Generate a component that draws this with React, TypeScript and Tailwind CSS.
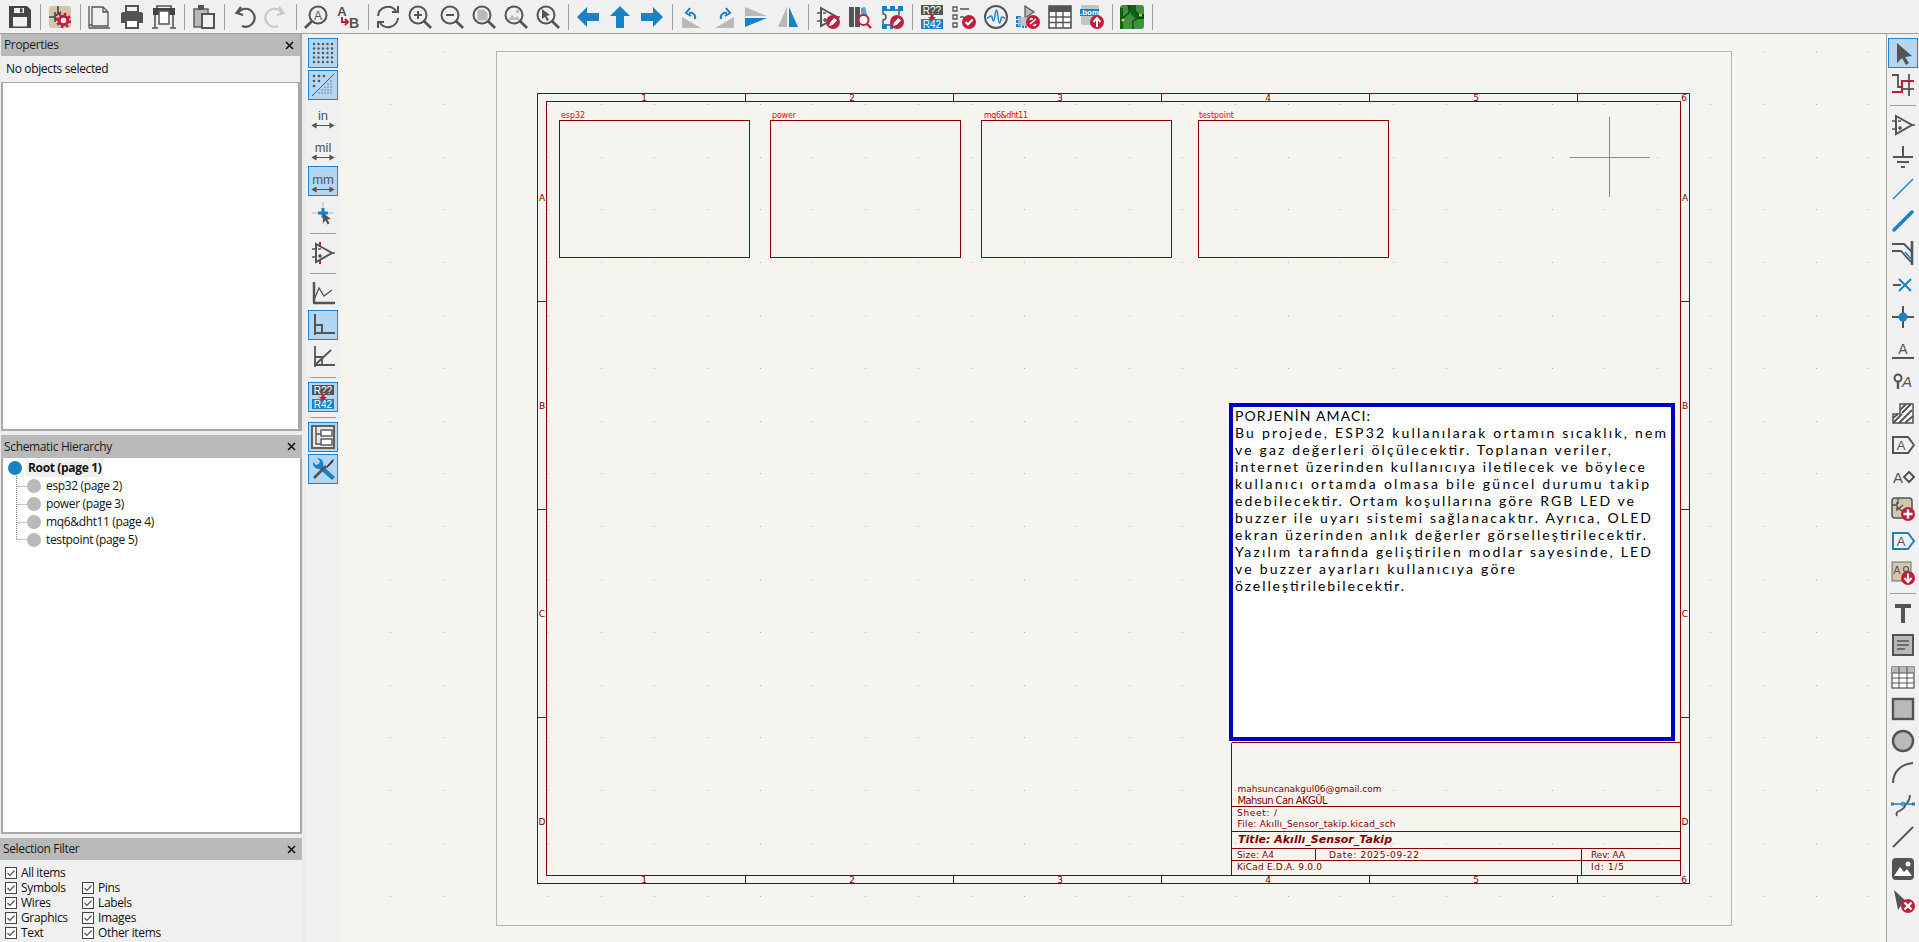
import type { ReactNode } from "react";

const D = "#545454";
const B = "#1a81c4";
const R = "#bf1e3c";
const G = "#b9b9b9";
const TAN = "#d2c7ac";

function Svg({ children }: { children: ReactNode }) {
    return <svg viewBox="0 0 24 24" className="w-6 h-6" fill="none">{children}</svg>;
}

const Mag = ({ children }: { children?: ReactNode }) => (
    <>
        <circle cx="10" cy="10" r="8.5" stroke={D} strokeWidth="2" />
        <path d="M16 16 23 23" stroke={D} strokeWidth="2.6" />
        {children}
    </>
);

const Opamp = ({ pins }: { pins?: boolean }) => (
    <>
        {pins && <path d="M9 1v4M9 19v4" stroke={R} strokeWidth="2" />}
        <path d="M5 3 21 12 5 21z" stroke={D} strokeWidth="2" />
        <path d="M1 8h4M1 16h4M21 12h3M7 8h3M7 15h4M9 13v4" stroke={D} strokeWidth="1.5" />
    </>
);

const RedDot = ({ children }: { children?: ReactNode }) => (
    <>
        <circle cx="17" cy="17" r="7" fill={R} />
        {children}
    </>
);

const Pen = () => <path d="M13 21l1-3.5 4.5-4.5 2.5 2.5-4.5 4.5z" fill="#fff" />;

const Lbl = (p: { x: number; y: number; s: number; t: string; c?: string; b?: boolean }) => (
    <text x={p.x} y={p.y} fontSize={p.s} fill={p.c ?? D} fontWeight={p.b ? 700 : 400} textAnchor="middle" className="font-['Liberation_Sans']">{p.t}</text>
);

const UnitArrow = () => <path d="M4 20.500h16M5 18.500l-3.500 2 3.500 2zM19 18.500l3.500 2-3.500 2z" stroke={D} strokeWidth="1.2" fill={D} />;

const Dots = ({ n, r, s, x0, y0 }: { n: number; r: number; s: number; x0: number; y0: number }) => (
    <>
        {Array.from({ length: n * n }).map((_, i) => (
            <circle key={i} cx={x0 + (i % n) * s} cy={y0 + Math.floor(i / n) * s} r={r} fill={D} />
        ))}
    </>
);

const icons: Record<string, ReactNode> = {
    save: (
        <>
            <path d="M1 1h18l4 4v18H1z" fill="#444" />
            <rect x="6" y="3" width="10" height="5" fill="#f0f0f0" />
            <rect x="12" y="3.500" width="2.500" height="4" fill="#444" />
            <rect x="5" y="12" width="14" height="9.500" fill="#f0f0f0" />
        </>
    ),
    setup: (
        <>
            <rect x="1" y="1" width="22" height="22" rx="3" fill={TAN} />
            <path d="M10 1v8M1 12h6M7 7v10M7 11l6-4M7 13l4 3" stroke="#444" strokeWidth="1.6" />
            <circle cx="15.5" cy="15.5" r="4.3" stroke={R} strokeWidth="3" fill="#fff" />
            <circle cx="15.5" cy="15.5" r="6.6" stroke={R} strokeWidth="2.2" strokeDasharray="2.6 2.6" />
        </>
    ),
    page: (
        <path d="M4 2h11l5 5v14H4zM1 1v22M1 23h21M15 2v5h5M1 20h3" stroke={D} strokeWidth="1.3" />
    ),
    print: (
        <>
            <path d="M6 1h12v6H6z" stroke={D} strokeWidth="2" />
            <path d="M1 9a2 2 0 0 1 2-2h18a2 2 0 0 1 2 2v9h-4v-4H5v4H1z" fill={D} />
            <rect x="6" y="15" width="12" height="8" stroke={D} strokeWidth="2" fill="#fff" />
        </>
    ),
    plot: (
        <>
            <rect x="1" y="3" width="22" height="7" fill="#444" />
            <path d="M5 3V1h14v2M3 10v13M21 10v13M0 23h6M18 23h6" stroke={D} strokeWidth="1.6" />
            <path d="M7 6h10v13H7z" fill="#fff" stroke={D} strokeWidth="1.5" />
        </>
    ),
    paste: (
        <>
            <rect x="2" y="4" width="14" height="18" fill={G} stroke={D} strokeWidth="1.4" />
            <rect x="6" y="0" width="6" height="5" fill={D} />
            <rect x="10" y="9" width="12" height="14" fill="#f0f0f0" stroke={D} strokeWidth="2" />
        </>
    ),
    undo: (
        <path d="M6 8A9 9 0 1 1 10 21M9 2 4.5 8 11 10" stroke={D} strokeWidth="2.2" />
    ),
    redo: (
        <path d="M18 8A9 9 0 1 0 14 21M15 2l4.5 6L13 10" stroke="#c8c8c8" strokeWidth="2.2" />
    ),
    find: (
        <>
            <circle cx="14" cy="10" r="8.5" stroke={D} strokeWidth="2" />
            <path d="M8 16 1 23" stroke={D} strokeWidth="2.6" />
            <Lbl x={14} y={14.5} s={12} t="A" />
        </>
    ),
    replace: (
        <>
            <Lbl x={6} y={11} s={13} t="A" b />
            <Lbl x={18} y={23} s={14} t="B" b />
            <path d="M6 12v5h5M9 14l3 3-3 3" stroke={R} strokeWidth="2" />
        </>
    ),
    refresh: (
        <path d="M2 11A10 10 0 0 1 20 6M22 1v6h-6M22 13A10 10 0 0 1 4 18M2 23v-6h6" stroke={D} strokeWidth="2" />
    ),
    zoomIn: <Mag><path d="M6 10h8M10 6v8" stroke={D} strokeWidth="2" /></Mag>,
    zoomOut: <Mag><path d="M6 10h8" stroke={D} strokeWidth="2" /></Mag>,
    zoomFit: <Mag><path d="M6 5h6l3 3v7H6z" fill={G} stroke={G} /></Mag>,
    zoomObj: <Mag><path d="M4 15l4-5 3 3 2-2 3 4zM12 5h3v3h-3z" fill={G} /></Mag>,
    zoomSel: <Mag><path d="M6 4l8 6-3.5 1 2.5 4-2 1-2-4-3 2z" fill={D} /></Mag>,
    left: <path d="M1 12 11 2v6h12v8H11v6z" fill={B} />,
    up: <path d="M12 1 22 11h-6v12H8V11H2z" fill={B} />,
    right: <path d="M23 12 13 2v6H1v8h12v6z" fill={B} />,
    rotL: (
        <>
            <path d="M2 12v11h19z" fill={G} />
            <path d="M15 14c1-4-2-7-6-6M10 3 6 8l5 3" stroke={B} strokeWidth="2" />
        </>
    ),
    rotR: (
        <>
            <path d="M22 12v11H3z" fill={G} />
            <path d="M9 14c-1-4 2-7 6-6M14 3l4 5-5 3" stroke={B} strokeWidth="2" />
        </>
    ),
    mirV: (
        <>
            <path d="M1 2 23 11H1z" fill={G} />
            <path d="M1 13H23L1 22z" fill={B} />
        </>
    ),
    mirH: (
        <>
            <path d="M11 2V22H2z" fill={G} />
            <path d="M13 2V22H22z" fill={B} />
        </>
    ),
    symEdit: <><Opamp /><RedDot><Pen /></RedDot></>,
    libBrowse: (
        <>
            <rect x="1" y="2" width="5" height="20" fill={D} />
            <rect x="7" y="2" width="5" height="20" fill={D} />
            <path d="M13 3l4-1 4 14h-8z" fill={B} opacity=".7" />
            <circle cx="15.5" cy="15" r="5" fill="#fff" stroke={R} strokeWidth="2" />
            <path d="M19 19l4 4" stroke={R} strokeWidth="2.4" />
        </>
    ),
    fpEdit: (
        <>
            <path d="M3 5h16v5M3 5v4a3 3 0 0 1 0 6v5h8" stroke={D} strokeWidth="1.5" />
            <path d="M2 1h5v5H2zM10 1h5v5h-5zM18 1h5v5h-5zM2 19h5v5H2zM10 19h3v5h-3z" fill={B} />
            <RedDot><Pen /></RedDot>
        </>
    ),
    annotate: (
        <>
            <rect x="1" y="0" width="22" height="10" fill={D} />
            <Lbl x={12} y={8.500} s={10} t="R??" c="#fff" />
            <rect x="1" y="14" width="22" height="10" fill={B} />
            <Lbl x={12} y={22.500} s={10} t="R42" c="#fff" />
            <path d="M10.500 9h3v3h2.500L12 16 8 12h2.500z" fill={R} />
        </>
    ),
    erc: (
        <>
            <path d="M1 2h4v4H1zM1 10h4v4H1zM1 18h4v4H1zM8 4h9M8 12h4" stroke={D} strokeWidth="1.3" />
            <RedDot><path d="M13.5 17l2.5 2.5 4.5-5" stroke="#fff" strokeWidth="2" /></RedDot>
        </>
    ),
    sim: (
        <>
            <circle cx="12" cy="12" r="11" stroke={D} strokeWidth="2" />
            <path d="M3 13c2 0 2-2 4-2s1 5 2.500 5 1.500-11 3-11 1.500 13 3 13 1-6 2.500-6 1 1 3 1" stroke={B} strokeWidth="1.5" />
        </>
    ),
    assign: (
        <>
            <path d="M9 1 18 7 9 13z" fill={G} stroke={D} strokeWidth="1.2" />
            <path d="M0 11h5v3H0zM0 15h5v3H0zM0 19h5v3H0zM6 20h2v3H6zM9 20h2v3H9z" fill={B} />
            <rect x="2" y="12" width="10" height="9" fill={G} opacity=".8" />
            <RedDot><path d="M14 19l6-5M14 15a2 2 0 0 1 3-1M20 19a2 2 0 0 1-3 1" stroke="#fff" strokeWidth="1.6" /></RedDot>
        </>
    ),
    table: (
        <>
            <rect x="1" y="1" width="22" height="22" fill="#fff" stroke={D} strokeWidth="1.6" />
            <rect x="1" y="1" width="22" height="6" fill={D} />
            <path d="M8 1v22M15 1v22M1 12h22M1 17.500h22" stroke={D} strokeWidth="1.4" />
        </>
    ),
    bom: (
        <>
            <rect x="1" y="0" width="18" height="20" rx="2" fill="#c4c4c4" />
            <rect x="0" y="4" width="19" height="7" fill={B} />
            <Lbl x={9.5} y={10} s={8} t=".bom" c="#fff" b />
            <RedDot><path d="M17 22v-9M13.500 17l3.500-4 3.500 4" stroke="#fff" strokeWidth="2" /></RedDot>
        </>
    ),
    pcb: (
        <>
            <rect x="0" y="0" width="24" height="24" rx="3" fill="#3f9142" />
            <path d="M0 3h3v24H0zM7 0h7v5l4 4h6v5h-8l-5-5z" fill="#0d6410" />
            <path d="M0 13h3l6-5V0M15 0v6l4 4h5M13 24v-8l5-3h6" stroke="#0d3d10" strokeWidth="1.200" />
            <circle cx="3" cy="15" r="1.600" fill="#e8b93a" />
            <circle cx="20.500" cy="10" r="1.600" fill="#e8b93a" />
        </>
    ),
    grid: <Dots n={5} r={1.2} s={4.5} x0={3} y0={3} />,
    gridOv: (
        <>
            {[[3, 3], [8, 3], [13, 3], [3, 8], [8, 8], [3, 13]].map(([x, y]) => (
                <circle key={x * 30 + y} cx={x} cy={y} r="1.3" fill={D} />
            ))}
            <path d="M1 23 23 1" stroke={D} strokeWidth="1" />
            {[[20, 8], [17, 11], [20, 11], [14, 14], [17, 14], [20, 14], [11, 17], [14, 17], [17, 17], [20, 17], [8, 20], [11, 20], [14, 20], [17, 20], [20, 20]].map(([x, y]) => (
                <circle key={x * 30 + y} cx={x} cy={y} r=".8" fill="#777" />
            ))}
        </>
    ),
    inch: <><Lbl x={12} y={15} s={13} t="in" /><UnitArrow /></>,
    mil: <><Lbl x={12} y={15} s={13} t="mil" /><UnitArrow /></>,
    mm: <><Lbl x={12} y={15} s={13} t="mm" /><UnitArrow /></>,
    crossCur: (
        <>
            <path d="M12 1v22M1 12h22" stroke={G} strokeWidth="1" />
            <path d="M12 7v10M7 12h10" stroke={B} strokeWidth="3" />
            <path d="M12 12l8 6-3.500.5 2 4-2 1-2-4-2.500 2.500z" fill={D} />
        </>
    ),
    opPins: <Opamp pins />,
    op: <Opamp />,
    lineAny: (
        <>
            <path d="M3 1v21M2 22h22" stroke={D} strokeWidth="2.500" />
            <path d="M3 19 8 7l5 8 8-6" stroke={D} strokeWidth="1.3" />
        </>
    ),
    line90: <path d="M4 1v21M3 20h21M4 12h7v8" stroke={D} strokeWidth="2" />,
    line45: <path d="M4 1v21M3 20h21M4 20 20 5M4 12h7v8" stroke={D} strokeWidth="1.8" />,
    hier: (
        <>
            <rect x="1" y="1" width="22" height="22" stroke={D} strokeWidth="1.800" fill="#e8e8e8" />
            <path d="M5 1v18h5M5 9h5" stroke={D} strokeWidth="1.400" />
            <rect x="10" y="5" width="11" height="6" fill="#fff" stroke={D} strokeWidth="1.400" />
            <rect x="10" y="14" width="11" height="6" fill="#fff" stroke={D} strokeWidth="1.400" />
        </>
    ),
    tools: (
        <>
            <path d="M2 5l3 3 3-1 1-3-3-3a6 6 0 0 1 6 8l12 11-3 3L8.500 12A6 6 0 0 1 2 5z" fill={B} />
            <path d="M3 21 15 9" stroke={D} strokeWidth="2.600" />
            <path d="M15 10l6-7 2-1-1 3-6 6z" fill="#333" />
        </>
    ),
    arrow: <path d="M6 2l15 13-7 1 4 6-3 2-4-7-5 5z" fill={D} />,
    route: (
        <>
            <path d="M1 2h6v12h4M18 1v22" stroke={D} strokeWidth="1.800" />
            <path d="M1 19h10V8h12" stroke={R} strokeWidth="2.200" />
            <path d="M11 16h12" stroke={D} strokeWidth="1.800" />
        </>
    ),
    ground: <path d="M12 1v11M2 12h20M6 17h12M10 22h4" stroke={D} strokeWidth="2" />,
    wire: <path d="M2 22 22 2" stroke={B} strokeWidth="1.500" />,
    bus: <path d="M3 21 21 3" stroke={B} strokeWidth="3.500" strokeLinecap="round" />,
    busEntry: (
        <>
            <path d="M21 0v24" stroke={D} strokeWidth="2.600" />
            <path d="M1 3h12l8 8M1 10h9l10 11" stroke={D} strokeWidth="1.800" />
            <path d="M14 11 21 19" stroke={B} strokeWidth="1.500" />
        </>
    ),
    noConn: <><path d="M2 12h8" stroke={D} strokeWidth="2" /><path d="M8 6l12 12M20 6 8 18" stroke={B} strokeWidth="2" /></>,
    junction: <><path d="M1 12h22M12 1v22" stroke={D} strokeWidth="2" /><circle cx="12" cy="12" r="4.500" fill={B} /></>,
    label: <><Lbl x={12} y={17} s={14} t="A" /><path d="M1 21h22" stroke={D} strokeWidth="2" /></>,
    netClass: (
        <>
            <circle cx="7" cy="9" r="3.500" stroke={D} strokeWidth="2" />
            <path d="M7 13v7" stroke={D} strokeWidth="2.400" />
            <text x="11" y="18" fontSize="15" fontStyle="italic" fill={D} className="font-['Liberation_Sans']">A</text>
        </>
    ),
    rule: (
        <>
            <path d="M2 22V13h7V3h13v19z" fill="#fff" stroke={D} strokeWidth="1.500" />
            <path d="M2 17l5-4M2 22l9-9M8 22 21 9M14 22l8-7M9 9l6-6M11 12l9-9" stroke={D} strokeWidth="2" />
        </>
    ),
    global: (
        <>
            <path d="M2 4h15l6 8-6 8H2z" stroke={D} strokeWidth="2" />
            <Lbl x={10} y={17} s={13} t="A" />
            <path d="M22 12h2" stroke={B} strokeWidth="2" />
        </>
    ),
    hierLabel: (
        <>
            <Lbl x={7} y={18} s={15} t="A" />
            <path d="M18 7l5 5-5 5-5-5z" stroke={D} strokeWidth="2" />
        </>
    ),
    sheetAdd: (
        <>
            <rect x="1" y="1" width="20" height="20" rx="3" fill={TAN} stroke={D} strokeWidth="1.500" />
            <path d="M7 1v6M1 8h5M6 5v8l6-5M6 10l5 4" stroke={D} strokeWidth="1.400" />
            <RedDot><path d="M17 12.500v9M12.500 17h9" stroke="#fff" strokeWidth="2.400" /></RedDot>
        </>
    ),
    hierPin: (
        <>
            <path d="M2 4h15l6 8-6 8H2z" stroke={B} strokeWidth="2" />
            <Lbl x={10} y={17} s={13} t="A" />
            <path d="M22 12h2" stroke={B} strokeWidth="2" />
        </>
    ),
    importLbl: (
        <>
            <rect x="1" y="1" width="19" height="19" fill={TAN} stroke={D} strokeWidth=".8" />
            <Lbl x={6} y={13} s={11} t="A" />
            <circle cx="15" cy="8" r="2.500" stroke={D} strokeWidth="1.200" />
            <RedDot><path d="M17 12.500v8M13.500 17l3.500 4 3.500-4" stroke="#fff" strokeWidth="2" /></RedDot>
        </>
    ),
    text: <path d="M4 3h16v4h-6v15h-4V7H4z" fill={D} />,
    textBox: (
        <>
            <rect x="2" y="2" width="20" height="20" fill={G} stroke={D} strokeWidth="2" />
            <path d="M6 8h12M6 12h12M6 16h8" stroke={D} strokeWidth="1.300" />
        </>
    ),
    gridTable: (
        <>
            <rect x="1" y="2" width="22" height="21" fill="#fff" stroke={D} strokeWidth="1.200" />
            <rect x="1" y="2" width="22" height="6" fill={G} />
            <path d="M8 2v21M16 2v21M1 8h22M1 13h22M1 18h22" stroke={D} strokeWidth="1" />
        </>
    ),
    rect: <rect x="2" y="2" width="20" height="20" fill={G} stroke={D} strokeWidth="2.400" />,
    circle: <circle cx="12" cy="12" r="10" fill={G} stroke={D} strokeWidth="2.400" />,
    arc: <path d="M2 22C2 11 10 3 22 2" stroke={D} strokeWidth="2" />,
    bezier: (
        <>
            <path d="M6 23c-3-6 6-4 8-10 1-3 5-4 5-11" stroke={D} strokeWidth="1.800" />
            <path d="M1 11h22" stroke={B} strokeWidth="1.500" />
            <rect x="0" y="9.500" width="3" height="3" fill={B} />
            <rect x="21" y="9.500" width="3" height="3" fill={B} />
            <circle cx="12" cy="11" r="2" stroke={B} fill="none" />
        </>
    ),
    gline: <path d="M2 22 22 2" stroke={D} strokeWidth="1.800" />,
    image: (
        <>
            <rect x="1" y="1" width="22" height="22" rx="4" fill={D} />
            <path d="M3 19 9 10l4 5 3-3 5 7z" fill="#fff" />
            <circle cx="17" cy="7" r="2.500" fill="#fff" />
        </>
    ),
    del: (
        <>
            <path d="M3 1l14 13-6 1-4 6z" fill={D} />
            <RedDot><path d="M13.500 13.500l7 7M20.500 13.500l-7 7" stroke="#fff" strokeWidth="2.400" /></RedDot>
        </>
    ),
};

function ToolBtn({ name, on }: { name: string; on?: boolean }) {
    return (
        <div className="w-8 h-8 shrink-0 flex items-center justify-center">
            <div className={`w-[30px] h-[30px] flex items-center justify-center ${on ? "bg-[#b3d7f3] border border-[#1a83d6]" : ""}`}>
                <Svg>{icons[name]}</Svg>
            </div>
        </div>
    );
}

const topBar = [
    ["save"], ["setup"],
    ["page", "print", "plot"], ["paste"], ["undo", "redo"], ["find", "replace"],
    ["refresh", "zoomIn", "zoomOut", "zoomFit", "zoomObj", "zoomSel"],
    ["left", "up", "right"], ["rotL", "rotR", "mirV", "mirH"],
    ["symEdit", "libBrowse", "fpEdit"],
    ["annotate", "erc", "sim", "assign", "table", "bom"], ["pcb"],
];

function TopToolbar() {
    return (
        <div className="h-[34px] shrink-0 bg-[#f0f0f0] border-b border-[#a0a0a0] flex items-center pl-1">
            {topBar.map((group) => (
                <div key={group[0]} className="flex items-center">
                    {group.map((n) => <ToolBtn key={n} name={n} />)}
                    <div className="w-2 flex justify-center"><div className="w-px h-[26px] bg-[#a0a0a0]" /></div>
                </div>
            ))}
        </div>
    );
}

type SideItem = { n: string; on?: boolean } | "sep";

const leftBar: SideItem[] = [
    { n: "grid", on: true }, { n: "gridOv", on: true }, { n: "inch" }, { n: "mil" }, { n: "mm", on: true }, { n: "crossCur" },
    "sep", { n: "opPins" }, "sep", { n: "lineAny" }, { n: "line90", on: true }, { n: "line45" },
    "sep", { n: "annotate", on: true }, "sep", { n: "hier", on: true }, { n: "tools", on: true },
];

const rightBar: SideItem[] = [
    { n: "arrow", on: true }, { n: "route" }, "sep",
    { n: "op" }, { n: "ground" }, { n: "wire" }, { n: "bus" }, { n: "busEntry" }, { n: "noConn" }, { n: "junction" },
    { n: "label" }, { n: "netClass" }, { n: "rule" }, { n: "global" }, { n: "hierLabel" }, { n: "sheetAdd" }, { n: "hierPin" }, { n: "importLbl" },
    "sep", { n: "text" }, { n: "textBox" }, { n: "gridTable" }, { n: "rect" }, { n: "circle" }, { n: "arc" }, { n: "bezier" }, { n: "gline" }, { n: "image" }, { n: "del" },
];

function SideToolbar({ items, className }: { items: SideItem[]; className: string }) {
    return (
        <div className={`shrink-0 bg-[#f0f0f0] flex flex-col items-center pt-[3px] ${className}`}>
            {items.map((it, i) =>
                it === "sep" ? (
                    <div key={i} className="h-2 w-full flex items-center justify-center"><div className="h-px w-[26px] bg-[#a0a0a0]" /></div>
                ) : (
                    <ToolBtn key={it.n} name={it.n} on={it.on} />
                ),
            )}
        </div>
    );
}

function PanelHead({ title, tall }: { title: string; tall?: boolean }) {
    return (
        <div className={`${tall ? "h-[23px]" : "h-[22px]"} shrink-0 bg-[#b9b9b9] flex items-center justify-between pl-[3px] pr-[6px] text-[#1c1c1c]`}>
            <span>{title}</span>
            <svg viewBox="0 0 9 9" className="w-[9px] h-[9px]"><path d="M1 1l7 7M8 1 1 8" stroke="#111" strokeWidth="1.600" /></svg>
        </div>
    );
}

function Check({ label }: { label: string }) {
    return (
        <div className="h-[15px] flex items-center gap-1">
            <svg viewBox="0 0 12 12" className="w-3 h-3 shrink-0">
                <rect x=".5" y=".5" width="11" height="11" fill="#fff" stroke="#444" />
                <path d="M2.500 6 5 8.500 9.500 3.500" fill="none" stroke="#555" strokeWidth="1.200" />
            </svg>
            <span>{label}</span>
        </div>
    );
}

const sheets = ["esp32 (page 2)", "power (page 3)", "mq6&dht11 (page 4)", "testpoint (page 5)"];

function LeftPanels() {
    return (
        <div className="w-[306px] shrink-0 bg-[#ececec] flex flex-col pr-1 font-['Open_Sans',sans-serif] text-[12px] tracking-[-0.35px] text-[#111]">
            <div className="h-[397px] shrink-0 flex flex-col pl-px border-r-2 border-[#a8a8a8]">
                <PanelHead title="Properties" />
                <div className="h-[27px] shrink-0 bg-[#f0f0f0] flex items-center pl-[5px] border-b border-[#a8a8a8]">No objects selected</div>
                <div className="flex-1 bg-white border-x-2 border-b-2 border-[#a8a8a8]" />
            </div>
            <div className="h-[4px] shrink-0" />
            <div className="h-[399px] shrink-0 flex flex-col pl-px">
                <PanelHead title="Schematic Hierarchy" tall />
                <div className="relative flex-1 bg-white border-2 border-t-0 border-[#a8a8a8] pr-1">
                    <svg className="absolute left-0 top-0" width="40" height="90">
                        <path d="M13.500 18V81M13.500 28.500H24M13.500 46.500H24M13.500 64.500H24M13.500 81.500H24" stroke="#888" strokeDasharray="1 1" fill="none" />
                    </svg>
                    <div className="relative h-[18px] flex items-center pl-[5px] gap-1 mt-px">
                        <div className="w-[14px] h-[14px] rounded-full bg-[#1a81c4]" />
                        <span className="font-bold bg-[#f0f0f0] px-[2px] h-[18px] leading-[18px]">Root (page 1)</span>
                    </div>
                    {sheets.map((s) => (
                        <div key={s} className="relative h-[18px] flex items-center pl-6 gap-[5px]">
                            <div className="w-[14px] h-[14px] rounded-full bg-[#b9b9b9]" />
                            <span>{s}</span>
                        </div>
                    ))}
                </div>
            </div>
            <div className="h-[4px] shrink-0" />
            <div className="flex-1 flex flex-col bg-[#f0f0f0] overflow-hidden">
                <PanelHead title="Selection Filter" />
                <div className="grid grid-cols-[77px_auto] pl-[5px] pt-[5px]">
                    <Check label="All items" /><div />
                    <Check label="Symbols" /><Check label="Pins" />
                    <Check label="Wires" /><Check label="Labels" />
                    <Check label="Graphics" /><Check label="Images" />
                    <Check label="Text" /><Check label="Other items" />
                </div>
            </div>
        </div>
    );
}

const DARK = "#840000";

function T(p: { x: number; y: number; w: number; s: number; t: string; c?: string; bold?: boolean; italic?: boolean }) {
    return (
        <text
            x={p.x}
            y={p.y}
            textLength={p.w}
            lengthAdjust="spacing"
            fontSize={p.s}
            fill={p.c ?? DARK}
            fontWeight={p.bold ? 700 : 400}
            fontStyle={p.italic ? "italic" : "normal"}
            className="font-['DejaVu_Sans',sans-serif]"
        >
            {p.t}
        </text>
    );
}

const Cx = (p: { x: number; y: number; t: string }) => (
    <text x={p.x} y={p.y} fontSize={9} fill={DARK} textAnchor="middle" className="font-['DejaVu_Sans',sans-serif]">{p.t}</text>
);

const noteLines: [string, number][] = [
    ["PORJENİN AMACI:", 135],
    ["Bu projede, ESP32 kullanılarak ortamın sıcaklık, nem", 431],
    ["ve gaz değerleri ölçülecektir. Toplanan veriler,", 376],
    ["internet üzerinden kullanıcıya iletilecek ve böylece", 410],
    ["kullanıcı ortamda olmasa bile güncel durumu takip", 414],
    ["edebilecektir. Ortam koşullarına göre RGB LED ve", 399],
    ["buzzer ile uyarı sistemi sağlanacaktır. Ayrıca, OLED", 416],
    ["ekran üzerinden anlık değerler görselleştirilecektir.", 411],
    ["Yazılım tarafında geliştirilen modlar sayesinde, LED", 416],
    ["ve buzzer ayarları kullanıcıya göre", 280],
    ["özelleştirilebilecektir.", 169],
];

const sheetBoxes: [string, number, number, number][] = [
    ["esp32", 559.5, 561, 24],
    ["power", 770.5, 772, 24],
    ["mq6&dht11", 981.5, 984, 44],
    ["testpoint", 1198.5, 1199, 35],
];

function Canvas() {
    const gridX = Array.from({ length: 29 }, (_, i) => Math.round(390 + i * 52.8));
    const gridY = Array.from({ length: 17 }, (_, i) => Math.round(51 + i * 52.8));
    const vTicks = [745.5, 953.5, 1161.5, 1369.5, 1577.5];
    const hTicks = [301.5, 509.5, 717.5];
    return (
        <div className="flex-1 bg-[#f5f4ef] overflow-hidden">
            <svg width="1546" height="908" viewBox="340 34 1546 908" className="block">
                <g fill="#b4b4b0" shapeRendering="crispEdges">
                    {gridX.flatMap((x) => gridY.map((y) => <rect key={`${x}-${y}`} x={x} y={y} width="1" height="1" />))}
                </g>
                <g fill="none" shapeRendering="crispEdges">
                    <rect x="496.5" y="51.5" width="1235" height="874" stroke="#b4b4b4" />
                    <path d="M1570 157.500H1650M1609.500 117V197" stroke="#8a8a8a" />
                    <rect x="537.5" y="93.5" width="1152" height="790" stroke={DARK} />
                    <rect x="546.5" y="101.5" width="1134" height="774" stroke={DARK} />
                    {vTicks.map((x) => <path key={x} d={`M${x} 93.500V101.500M${x} 875.500V883.500`} stroke={DARK} />)}
                    {hTicks.map((y) => <path key={y} d={`M537.500 ${y}H546.500M1680.500 ${y}H1689.500`} stroke={DARK} />)}
                    {sheetBoxes.map(([n, x]) => <rect key={n} x={x} y="120.5" width="190" height="137" stroke={DARK} />)}
                    <path d="M1231.500 742.500H1680.500M1231.500 742.500V875M1231.500 806.500H1680.500M1231.500 831.500H1680.500M1231.500 848.500H1680.500M1231.500 860.500H1680.500M1315.500 848.500V860.500M1581.500 848.500V875" stroke={DARK} />
                    <rect x="1231" y="405" width="442" height="334" fill="#fff" stroke="#0000c2" strokeWidth="4" />
                </g>

                {["1", "2", "3", "4", "5", "6"].map((t, i) => {
                    const x = i === 5 ? 1684 : 644 + i * 208;
                    return (
                        <g key={t}>
                            <Cx x={x} y={101} t={t} />
                            <Cx x={x} y={883} t={t} />
                        </g>
                    );
                })}
                {["A", "B", "C", "D"].map((t, i) => (
                    <g key={t}>
                        <Cx x={542} y={201 + i * 208} t={t} />
                        <Cx x={1685} y={201 + i * 208} t={t} />
                    </g>
                ))}

                {sheetBoxes.map(([n, , lx, w]) => (
                    <T key={n} x={lx} y={118} w={w} s={8} t={n} c="#ff0000" />
                ))}

                {noteLines.map(([line, w], i) => (
                    <text
                        key={line}
                        x="1235"
                        y={421 + i * 17}
                        textLength={w}
                        lengthAdjust="spacing"
                        fontSize="14"
                        fill="#000"
                        className="font-['Lato','Noto_Sans',sans-serif]"
                    >
                        {line}
                    </text>
                ))}

                <T x={1237.5} y={792} w={144} s={9} t="mahsuncanakgul06@gmail.com" />
                <T x={1237.5} y={804} w={90} s={10} t="Mahsun Can AKGÜL" />
                <T x={1237} y={816} w={40} s={9} t="Sheet: /" />
                <T x={1237.5} y={827} w={158} s={9} t="File: Akıllı_Sensor_takip.kicad_sch" />
                <T x={1238} y={843} w={154} s={11} t="Title: Akıllı_Sensor_Takip" bold italic />
                <T x={1237} y={858} w={37} s={9} t="Size: A4" />
                <T x={1329} y={858} w={90} s={9} t="Date: 2025-09-22" />
                <T x={1591} y={858} w={34} s={9} t="Rev: AA" />
                <T x={1237} y={870} w={85} s={9} t="KiCad E.D.A. 9.0.0" />
                <T x={1591} y={870} w={33} s={9} t="Id: 1/5" />
            </svg>
        </div>
    );
}

export default function App() {
    return (
        <div className="w-[1919px] h-[942px] flex flex-col overflow-hidden bg-[#f0f0f0]">
            <TopToolbar />
            <div className="flex-1 flex min-h-0">
                <LeftPanels />
                <SideToolbar items={leftBar} className="w-[34px]" />
                <Canvas />
                <SideToolbar items={rightBar} className="w-[33px] border-l border-[#a8a8a8]" />
            </div>
        </div>
    );
}
